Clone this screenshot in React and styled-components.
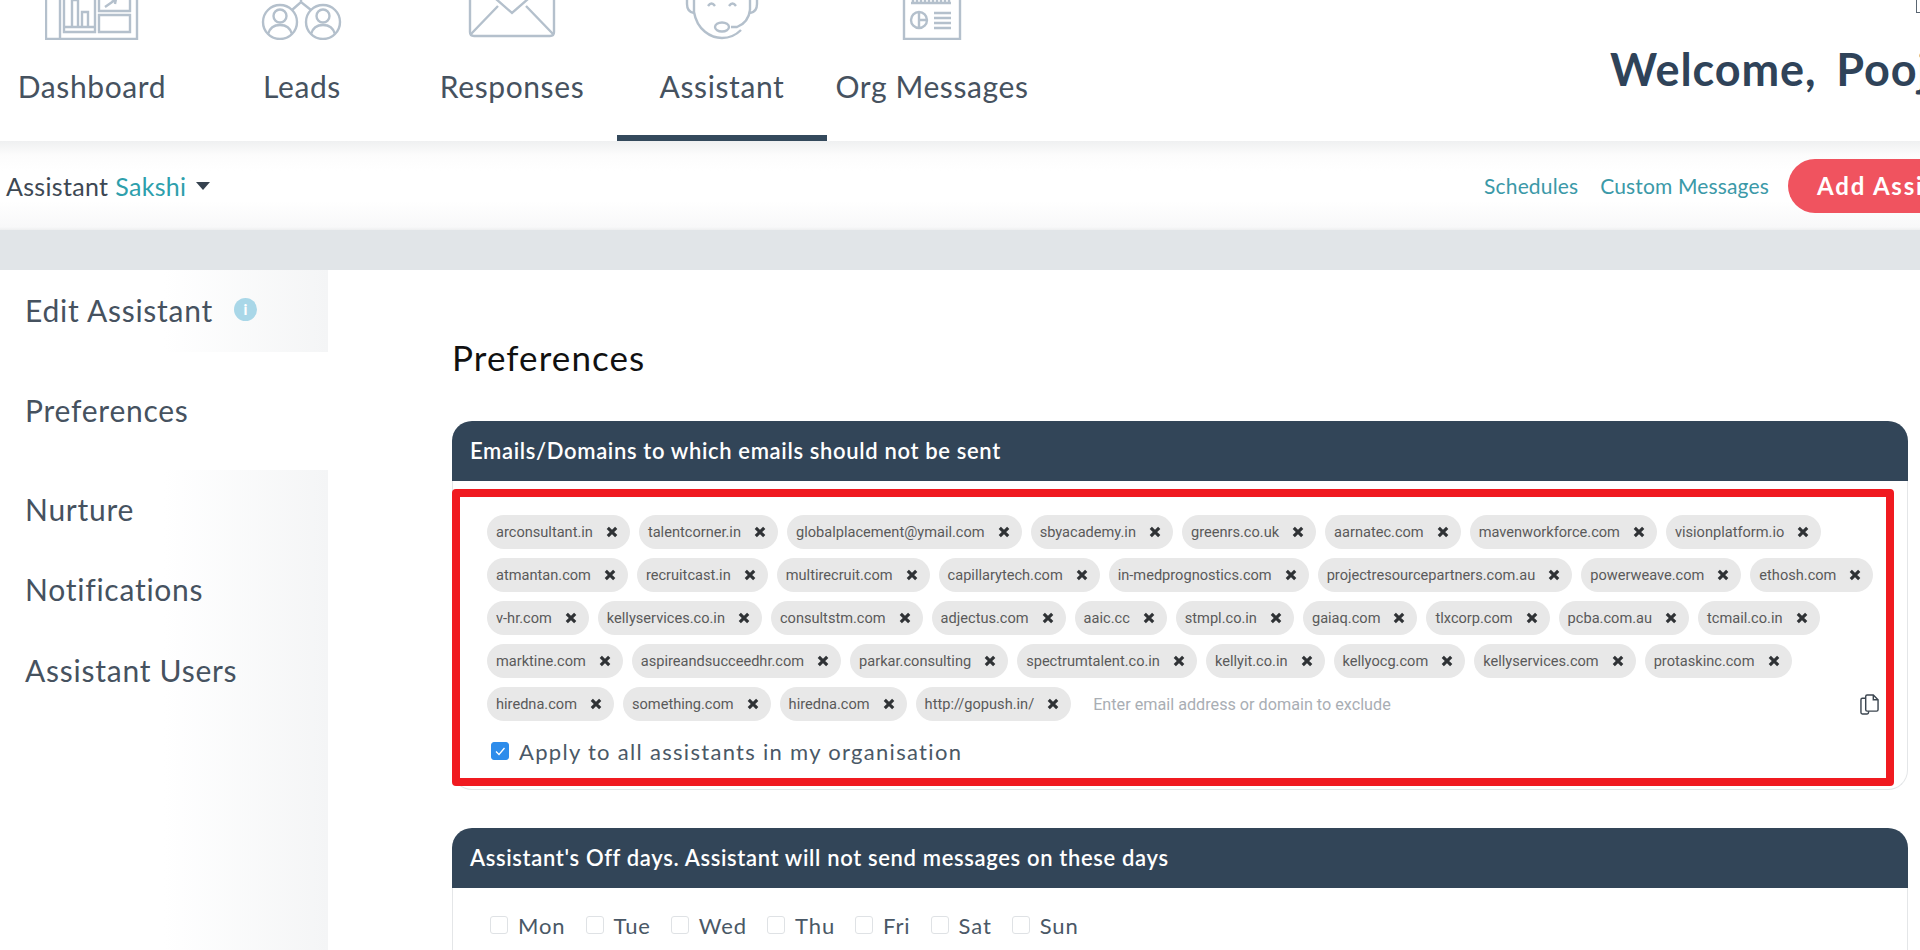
import React from "react";
import styled, { createGlobalStyle } from "styled-components";

const chips = [
  "arconsultant.in", "talentcorner.in", "globalplacement@ymail.com", "sbyacademy.in", "greenrs.co.uk", "aarnatec.com", "mavenworkforce.com", "visionplatform.io",
  "atmantan.com", "recruitcast.in", "multirecruit.com", "capillarytech.com", "in-medprognostics.com", "projectresourcepartners.com.au", "powerweave.com", "ethosh.com",
  "v-hr.com", "kellyservices.co.in", "consultstm.com", "adjectus.com", "aaic.cc", "stmpl.co.in", "gaiaq.com", "tlxcorp.com", "pcba.com.au", "tcmail.co.in",
  "marktine.com", "aspireandsucceedhr.com", "parkar.consulting", "spectrumtalent.co.in", "kellyit.co.in", "kellyocg.com", "kellyservices.com", "protaskinc.com",
  "hiredna.com", "something.com", "hiredna.com", "http://gopush.in/",
];

const days = ["Mon", "Tue", "Wed", "Thu", "Fri", "Sat", "Sun"];

const DashboardIcon = () => (
  <IconSvg width="94" height="60" viewBox="0 0 94 60">
    <path d="M1 0V59H92V0M15 0V59" />
    <path d="M19 0V52H50V0M27 47V20H33V47M37 47V32H43V47M19 47H50" />
    <path d="M54 35H85V52H54ZM54 0V31H85V0" />
    <path d="M60 27L70 20M66 19L71 19L70 24" />
  </IconSvg>
);

const LeadsIcon = () => (
  <IconSvg width="90" height="60" viewBox="0 0 90 60">
    <circle cx="23" cy="42" r="17" />
    <circle cx="66" cy="42" r="17" />
    <circle cx="23" cy="36" r="6.500" />
    <circle cx="66" cy="36" r="6.500" />
    <path d="M11 54C13 47 18 45 23 45C28 45 33 47 35 54M54 54C56 47 61 45 66 45C71 45 76 47 78 54" />
    <path d="M35 30L44 22L54 30M44 22V10" />
  </IconSvg>
);

const ResponsesIcon = () => (
  <IconSvg width="88" height="60" viewBox="0 0 88 60">
    <path d="M2 0V52Q2 56 6 56H82Q86 56 86 52V0" />
    <path d="M3 54L30 26M85 54L58 26M20 12L44 33L68 12" />
  </IconSvg>
);

const AssistantIcon = () => (
  <IconSvg width="74" height="60" viewBox="0 0 74 60">
    <path d="M2 10V24Q2 32 9 33M72 10V24Q72 32 65 33" />
    <path d="M9 10V32C12 50 26 58 37 58C46 58 52 54 56 50" />
    <path d="M65 30V10" />
    <path d="M65 30C64 38 60 44 52 47H46" />
    <ellipse cx="37" cy="47" rx="7" ry="4.500" />
    <path d="M23 26Q26.500 21 30 26M44 26Q47.500 21 51 26" />
  </IconSvg>
);

const OrgIcon = () => (
  <IconSvg width="60" height="60" viewBox="0 0 60 60">
    <path d="M2 0V59H58V0" />
    <path d="M9 23H49M11 19V23M15 19V23M19 19V23M23 19V23M27 19V23M31 19V23M35 19V23M39 19V23M43 19V23M47 19V23" />
    <circle cx="17" cy="40" r="8" />
    <path d="M17 32V48M17 40H25" />
    <path d="M32 33H49M32 38H49M32 43H49M32 48H49" />
  </IconSvg>
);

const tabs = [
  { label: "Dashboard", icon: <DashboardIcon /> },
  { label: "Leads", icon: <LeadsIcon /> },
  { label: "Responses", icon: <ResponsesIcon /> },
  { label: "Assistant", icon: <AssistantIcon />, active: true },
  { label: "Org Messages", icon: <OrgIcon /> },
];

const App = () => {
  return (
    <Page>
      <GlobalStyle />
      <TopNav>
        <Tabs>
          {tabs.map((t) => (
            <Tab key={t.label} $active={t.active}>
              {t.icon}
              <TabLabel>{t.label}</TabLabel>
            </Tab>
          ))}
        </Tabs>
        <Welcome>Welcome, Pooja</Welcome>
        <CornerMark />
      </TopNav>

      <SubBar>
        <AssistantPicker>
          Assistant <Teal>Sakshi</Teal>
          <Caret />
        </AssistantPicker>
        <SubActions>
          <SubLink>Schedules</SubLink>
          <SubLink>Custom Messages</SubLink>
          <AddButton>Add Assistant</AddButton>
        </SubActions>
      </SubBar>

      <GreyBand />

      <Content>
        <Sidebar>
          <SideItem $height={82}>
            Edit Assistant
            <InfoDot>i</InfoDot>
          </SideItem>
          <SideItem $height={118} $active>Preferences</SideItem>
          <SideItem $height={80}>Nurture</SideItem>
          <SideItem $height={81}>Notifications</SideItem>
          <SideItem $height={81}>Assistant Users</SideItem>
          <SideRest />
        </Sidebar>

        <Main>
          <Title>Preferences</Title>

          <Card>
            <CardHeader>Emails/Domains to which emails should not be sent</CardHeader>
            <CardBody>
              <Highlight>
                <ChipField>
                  {chips.map((c, i) => (
                    <Chip key={i}>
                      {c}
                      <ChipClose viewBox="0 0 10 10">
                        <path d="M1.500 1.500L8.500 8.500M8.500 1.500L1.500 8.500" />
                      </ChipClose>
                    </Chip>
                  ))}
                  <FieldEnd>
                    <ChipInput placeholder="Enter email address or domain to exclude" />
                    <CopyIcon viewBox="0 0 20 22">
                      <path d="M6 4.500H2.500Q1 4.500 1 6V19.500Q1 21 2.500 21H7.500Q9 21 9 19.500V18" />
                      <path d="M6 2.500Q6 1 7.500 1H14L19 6V16.500Q19 18 17.500 18H7.500Q6 18 6 16.500Z" />
                      <path d="M14 1V6H19" />
                    </CopyIcon>
                  </FieldEnd>
                </ChipField>
                <CheckRow>
                  <Check $checked>
                    <svg width="12" height="12" viewBox="0 0 12 12">
                      <path d="M2 6.500L5 9.500L10.500 3" fill="none" stroke="#fff" strokeWidth="1.300" />
                    </svg>
                  </Check>
                  <CheckLabel>Apply to all assistants in my organisation</CheckLabel>
                </CheckRow>
              </Highlight>
            </CardBody>
          </Card>

          <Card>
            <CardHeader>Assistant's Off days. Assistant will not send messages on these days</CardHeader>
            <DayBody>
              {days.map((d) => (
                <Day key={d}>
                  <Check />
                  <DayLabel>{d}</DayLabel>
                </Day>
              ))}
            </DayBody>
          </Card>
        </Main>
      </Content>
    </Page>
  );
};

const GlobalStyle = createGlobalStyle`
  html, body {
    margin: 0;
    padding: 0;
    background: #fff;
    overflow: hidden;
  }
  * {
    box-sizing: border-box;
  }
`;

const Page = styled.div`
  width: 1920px;
  height: 950px;
  overflow: hidden;
  font-family: Lato, "Liberation Sans", sans-serif;
  color: #46525f;
`;

const TopNav = styled.div`
  height: 141px;
  display: flex;
  justify-content: space-between;
  position: relative;
  overflow: hidden;
  background: #fff;
`;

const Tabs = styled.div`
  display: flex;
  margin-left: -13px;
`;

const Tab = styled.div`
  width: 210px;
  height: 141px;
  display: flex;
  flex-direction: column;
  align-items: center;
  justify-content: flex-end;
  border-bottom: 6px solid ${(p) => (p.$active ? "#34495c" : "transparent")};
`;

const IconSvg = styled.svg`
  flex: none;
  fill: none;
  stroke: #b4c0cc;
  stroke-width: 2.400;
`;

const TabLabel = styled.div`
  flex: none;
  margin: 26px 0 29px;
  height: 40px;
  line-height: 40px;
  font-size: 30px;
  letter-spacing: 0.600px;
  color: #46525f;
  white-space: nowrap;
`;

const Welcome = styled.div`
  position: absolute;
  left: 1610px;
  top: 44px;
  font-size: 45px;
  line-height: 50px;
  font-weight: 700;
  letter-spacing: 0.900px;
  word-spacing: 8px;
  color: #2f4359;
  white-space: nowrap;
`;

const CornerMark = styled.div`
  position: absolute;
  right: 0;
  top: -2px;
  width: 4px;
  height: 15px;
  border: 1px solid #5a6672;
  border-right: none;
`;

const SubBar = styled.div`
  height: 89px;
  display: flex;
  align-items: center;
  justify-content: space-between;
  background: linear-gradient(#eff0f1 0, #fcfcfc 14px, #fff 30px, #fff 60px, #f8f8f9 86px, #eeeff0 89px);
  overflow: hidden;
  padding-left: 6px;
`;

const AssistantPicker = styled.div`
  display: flex;
  align-items: center;
  gap: 7px;
  font-size: 25px;
  letter-spacing: 0.300px;
  color: #3d4853;
`;

const Teal = styled.span`
  color: #2e9fac;
`;

const Caret = styled.span`
  width: 0;
  height: 0;
  margin-left: 3px;
  border-left: 7px solid transparent;
  border-right: 7px solid transparent;
  border-top: 8px solid #36424f;
`;

const SubActions = styled.div`
  display: flex;
  align-items: center;
  flex: none;
`;

const SubLink = styled.div`
  margin-right: 22px;
  font-size: 21px;
  letter-spacing: 0.150px;
  color: #3b99a8;
  white-space: nowrap;
`;

const AddButton = styled.div`
  width: 132px;
  height: 54px;
  margin-left: -3px;
  padding-left: 29px;
  border-radius: 27px 0 0 27px;
  background: #f0535f;
  color: #fff;
  font-size: 24px;
  font-weight: 700;
  letter-spacing: 1.800px;
  line-height: 54px;
  white-space: nowrap;
  overflow: hidden;
`;

const GreyBand = styled.div`
  height: 40px;
  background: #e1e5e8;
`;

const Content = styled.div`
  display: flex;
  height: 680px;
`;

const Sidebar = styled.div`
  width: 328px;
  flex: none;
  display: flex;
  flex-direction: column;
`;

const SideItem = styled.div`
  height: ${(p) => p.$height}px;
  flex: none;
  display: flex;
  align-items: center;
  gap: 21px;
  padding: 0 0 3px 25px;
  font-size: 30px;
  letter-spacing: 0.750px;
  color: #46525f;
  background: ${(p) => (p.$active ? "#fff" : "linear-gradient(90deg, #fff 50%, #f4f5f6 100%)")};
`;

const SideRest = styled.div`
  flex: 1;
  background: linear-gradient(90deg, #fff 50%, #f4f5f6 100%);
`;

const InfoDot = styled.span`
  width: 23px;
  height: 23px;
  border-radius: 50%;
  background: #a9d7e8;
  color: #fff;
  font-size: 15px;
  font-weight: 900;
  letter-spacing: 0;
  line-height: 23px;
  text-align: center;
`;

const Main = styled.div`
  flex: 1;
  padding: 68px 12px 0 124px;
  display: flex;
  flex-direction: column;
  gap: 38px;
`;

const Title = styled.h1`
  flex: none;
  margin: 0 0 5px;
  height: 40px;
  font-size: 35px;
  line-height: 38px;
  font-weight: 400;
  letter-spacing: 1.100px;
  color: #111;
`;

const Card = styled.div`
  flex: none;
`;

const CardHeader = styled.div`
  height: 60px;
  padding-left: 18px;
  border-radius: 20px 20px 0 0;
  background: #324558;
  color: #fff;
  font-size: 22px;
  font-weight: 600;
  letter-spacing: 0.650px;
  line-height: 60px;
`;

const CardBody = styled.div`
  padding: 8px 13px 3px 0;
  border: 1px solid #e4e6e8;
  border-top: none;
  border-radius: 0 0 20px 20px;
`;

const Highlight = styled.div`
  margin-left: -1px;
  height: 297px;
  border: 8px solid #f01a20;
  border-radius: 4px;
  padding: 18px 9px 0 27px;
`;

const ChipField = styled.div`
  display: flex;
  flex-wrap: wrap;
  gap: 9px;
`;

const Chip = styled.div`
  height: 34px;
  display: flex;
  align-items: center;
  gap: 13px;
  padding: 0 12px 0 9px;
  border-radius: 17px;
  background: #e8e8e8;
  font-family: Roboto, "Liberation Sans", sans-serif;
  font-size: 14.600px;
  color: #5a5a5a;
  white-space: nowrap;
`;

const ChipClose = styled.svg`
  width: 12px;
  height: 12px;
  fill: none;
  stroke: #2f3235;
  stroke-width: 2.600;
`;

const FieldEnd = styled.div`
  flex: 1;
  height: 34px;
  display: flex;
  align-items: center;
  justify-content: space-between;
`;

const ChipInput = styled.input`
  width: 400px;
  margin-left: 11px;
  border: none;
  outline: none;
  background: transparent;
  font-family: Roboto, "Liberation Sans", sans-serif;
  font-size: 16.200px;
  &::placeholder {
    color: #a9aeb4;
  }
`;

const CopyIcon = styled.svg`
  width: 19px;
  height: 21px;
  margin-right: -2px;
  fill: none;
  stroke: #3c4650;
  stroke-width: 1.500;
`;

const CheckRow = styled.div`
  display: flex;
  align-items: center;
  gap: 10px;
  height: 30px;
  margin-top: 15px;
  padding-left: 4px;
`;

const Check = styled.span`
  width: 18px;
  height: 18px;
  flex: none;
  display: flex;
  align-items: center;
  justify-content: center;
  border-radius: 3px;
  border: 1px solid ${(p) => (p.$checked ? "#2d8ceb" : "#dfe2e5")};
  background: ${(p) => (p.$checked ? "#2d8ceb" : "#fff")};
`;

const CheckLabel = styled.span`
  font-size: 22px;
  letter-spacing: 1.300px;
  color: #4a5866;
  white-space: nowrap;
`;

const DayBody = styled.div`
  height: 90px;
  display: flex;
  align-items: flex-start;
  gap: 20px;
  padding: 23px 0 0 37px;
  border: 1px solid #e4e6e8;
  border-top: none;
`;

const Day = styled.div`
  display: flex;
  align-items: center;
  gap: 10px;
  height: 28px;
`;

const DayLabel = styled.span`
  font-size: 22px;
  letter-spacing: 0.900px;
  color: #4a5866;
`;

export default App;
